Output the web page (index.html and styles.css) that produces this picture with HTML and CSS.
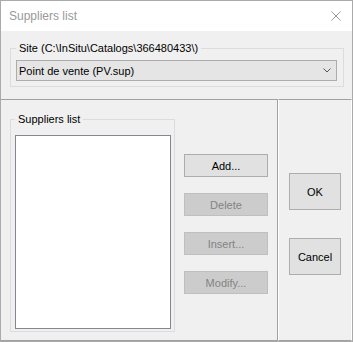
FILE: index.html
```html
<!DOCTYPE html>
<html>
<head>
<meta charset="utf-8">
<link rel="stylesheet" href="styles.css">
</head>
<body>
<div class="window">
  <div class="titlebar">
    <span class="title">Suppliers list</span>
    <svg class="close" width="10" height="10" viewBox="0 0 10 10"><path d="M0.5 0.5 L9.5 9.5 M9.5 0.5 L0.5 9.5" stroke="#9a9a9a" stroke-width="1" fill="none"/></svg>
  </div>
  <div class="top">
    <fieldset class="group site">
      <legend>Site (C:\InSitu\Catalogs\366480433\)</legend>
      <div class="combo">
        <span>Point de vente (PV.sup)</span>
        <svg class="chev" width="8" height="5" viewBox="0 0 8 5"><path d="M0.5 0.5 L4 4 L7.5 0.5" stroke="#555" stroke-width="1" fill="none"/></svg>
      </div>
    </fieldset>
  </div>
  <div class="bottom">
    <div class="panel main">
      <fieldset class="group list">
        <legend>Suppliers list</legend>
        <div class="listbox"></div>
      </fieldset>
      <div class="actions">
        <div class="btn">Add...</div>
        <div class="btn disabled">Delete</div>
        <div class="btn disabled">Insert...</div>
        <div class="btn disabled">Modify...</div>
      </div>
    </div>
    <div class="panel side">
      <div class="btn big">OK</div>
      <div class="btn big">Cancel</div>
    </div>
  </div>
</div>
</body>
</html>
```
FILE: styles.css
```css
* { box-sizing: border-box; }
html, body { margin: 0; padding: 0; }
body {
  font-family: "Liberation Sans", "Noto Sans", sans-serif;
  font-size: 11px;
  color: #000;
  background: #f0f0f0;
}
.window {
  width: 353px;
  height: 342px;
  border: 1px solid #aaaaaa;
  background: #f0f0f0;
  display: flex;
  flex-direction: column;
}
.titlebar {
  height: 30px;
  flex: none;
  background: #fff;
  display: flex;
  align-items: center;
  justify-content: space-between;
  padding: 0 11px 0 8px;
}
.title {
  font-size: 12px;
  color: #999;
}
.close { display: block; }
.top {
  height: 68px;
  flex: none;
  padding: 10px 9px 0 9px;
}
.group {
  margin: 0;
  min-width: 0;
  border: 1px solid #dcdcdc;
}
.group legend {
  padding: 0 3px;
  line-height: 14px;
  height: 14px;
}
.site {
  width: 334px;
  padding: 5px 6px 5px 5px;
}
.combo {
  height: 21px;
  border: 1px solid #acacac;
  background: #e5e5e5;
  display: flex;
  align-items: center;
  justify-content: space-between;
  padding: 0 5px 0 2px;
}
.chev { display: block; }
.bottom {
  flex: 1;
  display: flex;
}
.panel {
  border-top: 1px solid #a0a0a0;
  border-bottom: 1px solid #a0a0a0;
}
.main {
  width: 277px;
  border-right: 1px solid #a0a0a0;
  display: flex;
  align-items: flex-start;
}
.side {
  flex: 1;
  border-left: 1px solid #fff;
  border-right: 1px solid #fff;
  display: flex;
  flex-direction: column;
  align-items: center;
  padding-top: 73px;
  gap: 28px;
}
.list {
  width: 165px;
  margin: 12px 0 0 9px;
  padding: 9px 3px 2px 4px;
}
.listbox {
  height: 194px;
  border: 1px solid #828790;
  background: #fff;
}
.actions {
  margin: 54px 0 0 9px;
  display: flex;
  flex-direction: column;
  gap: 16px;
}
.btn {
  width: 84px;
  height: 23px;
  border: 1px solid #adadad;
  background: #e1e1e1;
  display: flex;
  align-items: center;
  justify-content: center;
}
.btn.disabled {
  background: #cccccc;
  border-color: #bfbfbf;
  color: #838383;
}
.btn.big {
  width: 52px;
  height: 37px;
}
```
